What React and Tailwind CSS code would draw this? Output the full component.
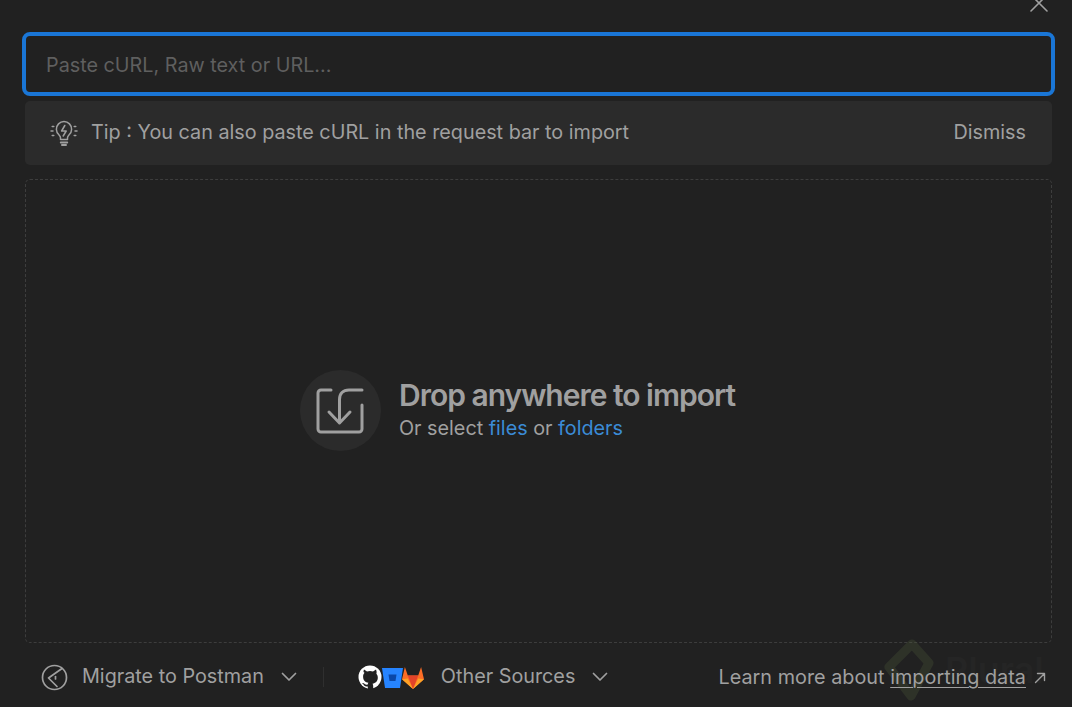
import React from "react";

const Chevron = () => (
  <svg width="16" height="10" viewBox="0 0 16 10" fill="none" stroke="#a0a0a0" strokeWidth="1.7" strokeLinecap="round" strokeLinejoin="round">
    <path d="M1.5 1.5 8 8l6.5-6.5" />
  </svg>
);

const Bulb = () => (
  <svg width="28" height="28" viewBox="0 0 28 28" fill="none" stroke="#a0a0a0" strokeWidth="1.5" strokeLinecap="round" strokeLinejoin="round">
    <path d="M10.5 20.5v-1.7c0-1.3-.7-2-1.6-3a7.6 7.6 0 1 1 10.2 0c-.9 1-1.6 1.7-1.6 3v1.7z" />
    <path d="M14.8 6.5 11.6 12h4.6l-3 5" />
    <path d="M10.8 23.4h6.4M12 26h4" strokeWidth="2" />
    <path d="M2.2 7.5h1.6M1 12h2M2.2 16.5h1.6M24.2 7.5h1.6M25 12h2M24.2 16.5h1.6" />
  </svg>
);

const ImportIcon = () => (
  <svg width="48" height="48" viewBox="0 0 48 48" fill="none" stroke="#a0a0a0" strokeWidth="3" strokeLinecap="round" strokeLinejoin="round">
    <path d="M15 3H5a3 3 0 0 0-3 3v36a3 3 0 0 0 3 3h38a3 3 0 0 0 3-3V18" />
    <path d="M46 3H33c-6 0-9.500 3.500-9.500 9.500V35" />
    <path d="M13 25l10.500 11L34 25" />
  </svg>
);

const MigrateIcon = () => (
  <svg width="27" height="27" viewBox="0 0 27 27" fill="none" stroke="#a0a0a0" strokeWidth="1.7" strokeLinecap="round" strokeLinejoin="round">
    <circle cx="13.500" cy="13.500" r="12" />
    <path d="M21 4.500 7.500 14l8.500 8.500" />
    <path d="M14.500 12.500v2.500" />
  </svg>
);

const Logos = () => (
  <svg width="70" height="26" viewBox="0 0 70 26" className="block">
    <circle cx="12" cy="13" r="11.500" fill="#ffffff" />
    <path d="M6 5.500l3 2a9.500 9.500 0 0 1 6 0l3-2c.7 1.800.8 3 .4 4.200 1 1.200 1.400 2.500 1.400 3.800 0 4-2.400 5.700-5.300 6.200.5.600.7 1.400.7 2.500V26H9.800v-3.500c-2.800.5-3.800-.8-4.500-2.200l-1.500-1.200 2 .2c1 .6 1.700 1.700 4 1.300 0-.7.300-1.300.6-1.800-2.900-.5-5.300-2.200-5.300-6.300 0-1.300.4-2.600 1.400-3.800C5.200 8.500 5.300 7.300 6 5.500z" fill="#212121" />
    <circle cx="12.500" cy="14" r="3.600" fill="#212121" />
    <path d="M24 4h21l-3 20H27z" fill="#2684ff" />
    <path d="M30.500 10.500h8l-1 6.500h-6z" fill="#0a47a8" />
    <path d="M55 25 44 15.300 46.900 3l2.900 8.500h10.400L63.100 3 66 15.300z" fill="#fc6d26" />
    <path d="M55 25 49.800 11.500h10.400z" fill="#e24329" />
    <path d="M44 15.300 55 25 49.800 14.500z M66 15.300 55 25 60.200 14.500z" fill="#fca326" />
  </svg>
);

export default function App() {
  return (
    <div
      className="relative h-[707px] w-[1072px] overflow-hidden bg-[#212121] text-[19.8px] text-[#a0a0a0] flex flex-col"
      style={{ fontFamily: "Inter, 'Noto Sans', sans-serif" }}
    >
      <div className="h-8 flex justify-end items-start pr-[23px] overflow-hidden">
        <svg width="20" height="20" viewBox="0 0 20 20" fill="none" stroke="#a0a0a0" strokeWidth="1.6" strokeLinecap="round" className="-mt-[7px]">
          <path d="M2 2l16 16M18 2 2 18" />
        </svg>
      </div>

      <div className="ml-[22px] mr-[17px] h-16 shrink-0 rounded-[8px] border-[4px] border-[#1a76d6] bg-[#212121] flex items-center pl-[20px] pt-[3px] text-[#5f5f5f]">
        Paste cURL, Raw text or URL...
      </div>

      <div className="ml-[25px] mr-[20px] mt-[5px] h-16 shrink-0 rounded-[5px] bg-[#2b2b2b] flex items-center justify-between pl-[25px] pr-[26px]">
        <div className="flex items-center gap-[13px]">
          <Bulb />
          <span>Tip : You can also paste cURL in the request bar to import</span>
        </div>
        <span>Dismiss</span>
      </div>

      <div className="ml-[25px] mr-[20px] mt-[14px] h-[464px] shrink-0 rounded-[5px] border border-dashed border-[#3d3d3d] flex items-center justify-center pr-[42px]">
        <div className="flex items-center gap-[18px] -mt-[1px]">
          <div className="w-[81px] h-[81px] rounded-full bg-[#2b2b2b] flex items-center justify-center">
            <ImportIcon />
          </div>
          <div className="flex flex-col -mt-[4px]">
            <div className="text-[30px] leading-[38px] font-semibold tracking-[-1px]">Drop anywhere to import</div>
            <div className="leading-[28px]">
              Or select <span className="text-[#3b8bd6]">files</span> or <span className="text-[#3b8bd6]">folders</span>
            </div>
          </div>
        </div>
      </div>

      <svg width="60" height="66" viewBox="0 0 60 66" fill="none" className="absolute left-[880px] top-[638px] pointer-events-none">
        <path d="M32 6 49 25 31 58 9 29z" stroke="#56663f" strokeOpacity="0.26" strokeWidth="9" strokeLinejoin="round" />
      </svg>
      <div className="absolute left-[945px] top-[648px] text-[36px] leading-[44px] font-semibold text-[#252525] pointer-events-none">Plural</div>

      <div className="relative flex-1 flex items-center justify-between pl-[41px] pr-[26px] pt-[4px]">
        <div className="flex items-center">
          <MigrateIcon />
          <span className="ml-[14px]">Migrate to Postman</span>
          <span className="ml-[17px]"><Chevron /></span>
          <span className="ml-[26px] w-px h-5 bg-[#2f2f2f]" />
          <span className="ml-[34px]"><Logos /></span>
          <span className="ml-[13px]">Other Sources</span>
          <span className="ml-[17px]"><Chevron /></span>
        </div>
        <div className="flex items-center pt-[1px]">
          <span className="tracking-[0.03px]">Learn more about <span className="underline underline-offset-[3px] decoration-1">importing data</span></span>
          <svg width="12" height="12" viewBox="0 0 12 12" fill="none" stroke="#a0a0a0" strokeWidth="1.4" strokeLinecap="round" strokeLinejoin="round" className="ml-[8px]">
            <path d="M1.500 10.500 10.500 1.500M3.500 1.500h7v7" />
          </svg>
        </div>
      </div>
    </div>
  );
}
